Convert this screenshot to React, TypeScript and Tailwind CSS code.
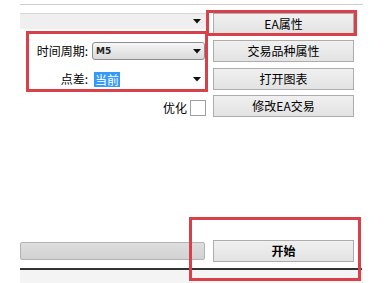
import React from "react";

const Arrow = () => (
  <svg width="8" height="5" viewBox="0 0 8 5" className="shrink-0">
    <path d="M0 0 L8 0 L4 4.5 Z" fill="#111" />
  </svg>
);

const Btn = ({ children, bold = false, h = "h-[22px]" }: { children: React.ReactNode; bold?: boolean; h?: string }) => (
  <div
    className={`w-[141px] ${h} shrink-0 flex items-center justify-center border border-[#adadad] bg-gradient-to-b from-[#f0f0f0] to-[#e3e3e3] text-[12px] text-black leading-none ${bold ? "font-bold" : ""}`}
  >
    {children}
  </div>
);

export default function App() {
  return (
    <div
      className="relative w-[389px] h-[283px] overflow-hidden bg-white"
      style={{ fontFamily: '"Noto Sans CJK SC", "Noto Sans", sans-serif' }}
    >
      <div className="ml-[20px] w-[343px] flex flex-col h-full">
        <div className="mt-[4px] h-px bg-[#cdcdcd]" />
        {/* Row 1 */}
        <div className="mt-[8px] flex items-start gap-[7px]">
          <div className="w-[186px] h-[16px] border-t border-[#d8d8d8] bg-[#efefef] flex items-center justify-end pr-[5px]">
            <Arrow />
          </div>
          <Btn h="h-[21px]">EA属性</Btn>
        </div>
        {/* Row 2 */}
        <div className="mt-[6px] flex items-center gap-[7px]">
          <div className="w-[186px] flex items-center">
            <div className="w-[68px] text-right text-[12px] text-black leading-none">时间周期:</div>
            <div className="ml-[4px] w-[113px] h-[18px] rounded-[3px] border border-[#8e8e8e] bg-gradient-to-b from-[#f6f6f6] to-[#dadada] flex items-center justify-between pl-[3px] pr-[3px]">
              <span className="text-[9px] font-bold text-[#222] leading-none" style={{ fontFamily: '"DejaVu Sans", sans-serif' }}>M5</span>
              <Arrow />
            </div>
          </div>
          <Btn>交易品种属性</Btn>
        </div>
        {/* Row 3 */}
        <div className="mt-[6px] flex items-center gap-[7px]">
          <div className="w-[186px] flex items-center">
            <div className="w-[68px] text-right text-[12px] text-black leading-none">点差:</div>
            <div className="ml-[4px] w-[113px] h-[18px] bg-white flex items-center justify-between pl-[2px] pr-[4px]">
              <span className="bg-[#3399ff] text-white text-[12px] leading-[15px] px-px">当前</span>
              <Arrow />
            </div>
          </div>
          <Btn>打开图表</Btn>
        </div>
        {/* Row 4 */}
        <div className="mt-[5px] flex items-start gap-[7px]">
          <div className="w-[186px] flex items-center justify-end gap-[3px] mt-[5px]">
            <span className="text-[12px] text-black leading-none">优化</span>
            <div className="w-[16px] h-[16px] border border-[#a0a0a0] bg-white" />
          </div>
          <Btn>修改EA交易</Btn>
        </div>
        <div className="flex-1" />
        {/* Row 5 */}
        <div className="flex items-center gap-[8px]">
          <div className="w-[185px] h-[18px] rounded-[2px] border border-[#b3b3b3] bg-gradient-to-b from-[#dedede] to-[#d2d2d2]" />
          <Btn bold>开始</Btn>
        </div>
        <div className="mt-[6px] h-[2px] w-[342px] bg-[#333]" />
        <div className="h-[13px] bg-[#f4f4f4]" />
      </div>

      {/* annotation boxes */}
      <div className="absolute left-[26px] top-[31px] w-[182px] h-[61px] border-[3px] border-[#d8404a]" />
      <div className="absolute left-[206px] top-[10px] w-[151px] h-[26px] border-[3px] border-[#d8404a]" />
      <div className="absolute left-[189px] top-[217px] w-[172px] h-[64px] border-[3px] border-[#d8404a]" />
    </div>
  );
}
